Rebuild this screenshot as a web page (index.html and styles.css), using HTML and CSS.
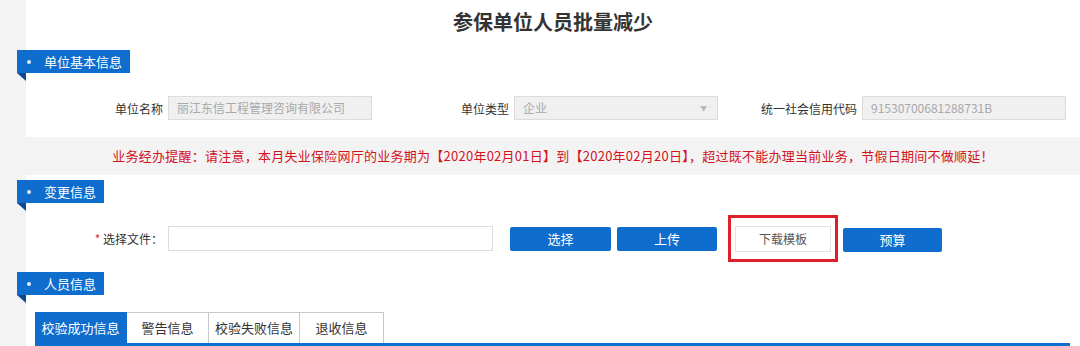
FILE: index.html
```html
<!DOCTYPE html>
<html lang="zh-CN">
<head>
    <meta charset="UTF-8">
    <title>参保单位人员批量减少</title>
    <link rel="stylesheet" href="styles.css">
</head>
<body>
    <div class="page">
        <div class="panel panel-top">
            <h1>参保单位人员批量减少</h1>
            <div class="sec-title">单位基本信息</div>
            <div class="info-row">
                <div class="field">
                    <span class="label">单位名称</span>
                    <div class="box readonly">丽江东信工程管理咨询有限公司</div>
                </div>
                <div class="field">
                    <span class="label">单位类型</span>
                    <div class="box readonly select">企业<span class="arrow">▼</span></div>
                </div>
                <div class="field">
                    <span class="label">统一社会信用代码</span>
                    <div class="box readonly">91530700681288731B</div>
                </div>
            </div>
        </div>

        <div class="notice">业务经办提醒：请注意，本月失业保险网厅的业务期为【2020年02月01日】到【2020年02月20日】，超过既不能办理当前业务，节假日期间不做顺延！</div>

        <div class="panel panel-bottom">
            <div class="sec-title">变更信息</div>
            <div class="file-row">
                <label class="file-label"><span class="star">*</span> 选择文件：</label>
                <div class="box file-box"></div>
                <button class="btn btn-choose">选择</button>
                <button class="btn btn-upload">上传</button>
                <div class="highlight">
                    <button class="btn-plain">下载模板</button>
                </div>
                <button class="btn btn-budget">预算</button>
            </div>

            <div class="sec-title sec-people">人员信息</div>
            <div class="tabs">
                <div class="tab active" style="width: 92px">校验成功信息</div>
                <div class="tab" style="width: 82px">警告信息</div>
                <div class="tab" style="width: 91px">校验失败信息</div>
                <div class="tab" style="width: 84px">退收信息</div>
            </div>
        </div>
    </div>
</body>
</html>
```

FILE: styles.css
```css
body {
    margin: 0;
    background-color: #f3f3f4;
    font-family: "Microsoft YaHei", "Noto Sans CJK SC", sans-serif;
    font-size: 12px;
    color: #333;
}
.page {
    margin-left: 26px;
}
.panel {
    background-color: #fff;
}
.panel-top {
    height: 137px;
    box-sizing: border-box;
}
h1 {
    margin: 0 0 6px;
    height: 44px;
    line-height: 44px;
    text-align: center;
    font-size: 20px;
    font-weight: bold;
    color: #333;
}

/* blue ribbon section titles */
.sec-title {
    position: relative;
    display: flex;
    align-items: center;
    width: fit-content;
    height: 23px;
    margin-left: -9px;
    padding: 0 8px 0 10px;
    background-color: #0e6dcd;
    color: #fff;
    font-size: 13px;
}
.sec-title::before {
    content: "";
    width: 4px;
    height: 4px;
    border-radius: 50%;
    background-color: #dfeaf7;
    margin-right: 13px;
}
.sec-title::after {
    content: "";
    position: absolute;
    left: 0;
    top: 100%;
    width: 0;
    height: 0;
    border-top: 8px solid #0a4a90;
    border-left: 9px solid transparent;
}

.info-row {
    display: grid;
    grid-template-columns: 346px 346px 348px;
    margin-top: 23px;
}
.field {
    display: flex;
    justify-content: flex-end;
    align-items: center;
    gap: 5px;
}
.label {
    color: #333;
}
.box {
    box-sizing: border-box;
    height: 24px;
    line-height: 22px;
    border: 1px solid #dcdcdc;
    padding: 0 8px;
}
.readonly {
    width: 204px;
    background-color: #f0f0f0;
    color: #a8a8a8;
}
.select {
    display: flex;
    justify-content: space-between;
}
.arrow {
    font-size: 7px;
    color: #bbb;
    margin-right: 2px;
}

.notice {
    height: 38px;
    line-height: 38px;
    text-align: center;
    font-size: 13px;
    letter-spacing: 0.25px;
    color: #d3121c;
}

.panel-bottom {
    padding-top: 5px;
    height: 171px;
    box-sizing: border-box;
}
.file-row {
    display: flex;
    align-items: center;
    height: 47px;
    margin-top: 12px;
}
.file-label {
    width: 137px;
    text-align: right;
    color: #333;
}
.star {
    color: #e0303a;
}
.file-box {
    width: 325px;
    height: 25px;
    margin-left: 5px;
    background-color: #fff;
}
.btn {
    height: 24px;
    border: none;
    border-radius: 2px;
    background-color: #0e6dcd;
    color: #fff;
    font-family: inherit;
    font-size: 13px;
    padding: 0;
}
.btn-choose {
    width: 101px;
    margin-left: 17px;
}
.btn-upload {
    width: 100px;
    margin-left: 6px;
}
.highlight {
    display: flex;
    align-items: center;
    box-sizing: border-box;
    width: 110px;
    height: 47px;
    margin-left: 11px;
    padding: 0 4px;
    border: 3px solid #df1f29;
}
.btn-plain {
    width: 96px;
    height: 26px;
    border: 1px solid #e2e2e2;
    background-color: #fff;
    color: #555;
    font-family: inherit;
    font-size: 12px;
    padding: 0;
}
.btn-budget {
    width: 99px;
    margin-left: 5px;
    margin-top: 2px;
}

.sec-people {
    margin-top: 10px;
}
.tabs {
    display: flex;
    margin: 17px 10px 0 9px;
    border-bottom: 3px solid #0e6dcd;
}
.tab {
    box-sizing: border-box;
    height: 31px;
    line-height: 30px;
    text-align: center;
    font-size: 13px;
    color: #333;
    border: 1px solid #c8c8c8;
    border-bottom: none;
    border-left: none;
}
.tab.active {
    background-color: #0e6dcd;
    border-color: #0e6dcd;
    color: #fff;
}
```
